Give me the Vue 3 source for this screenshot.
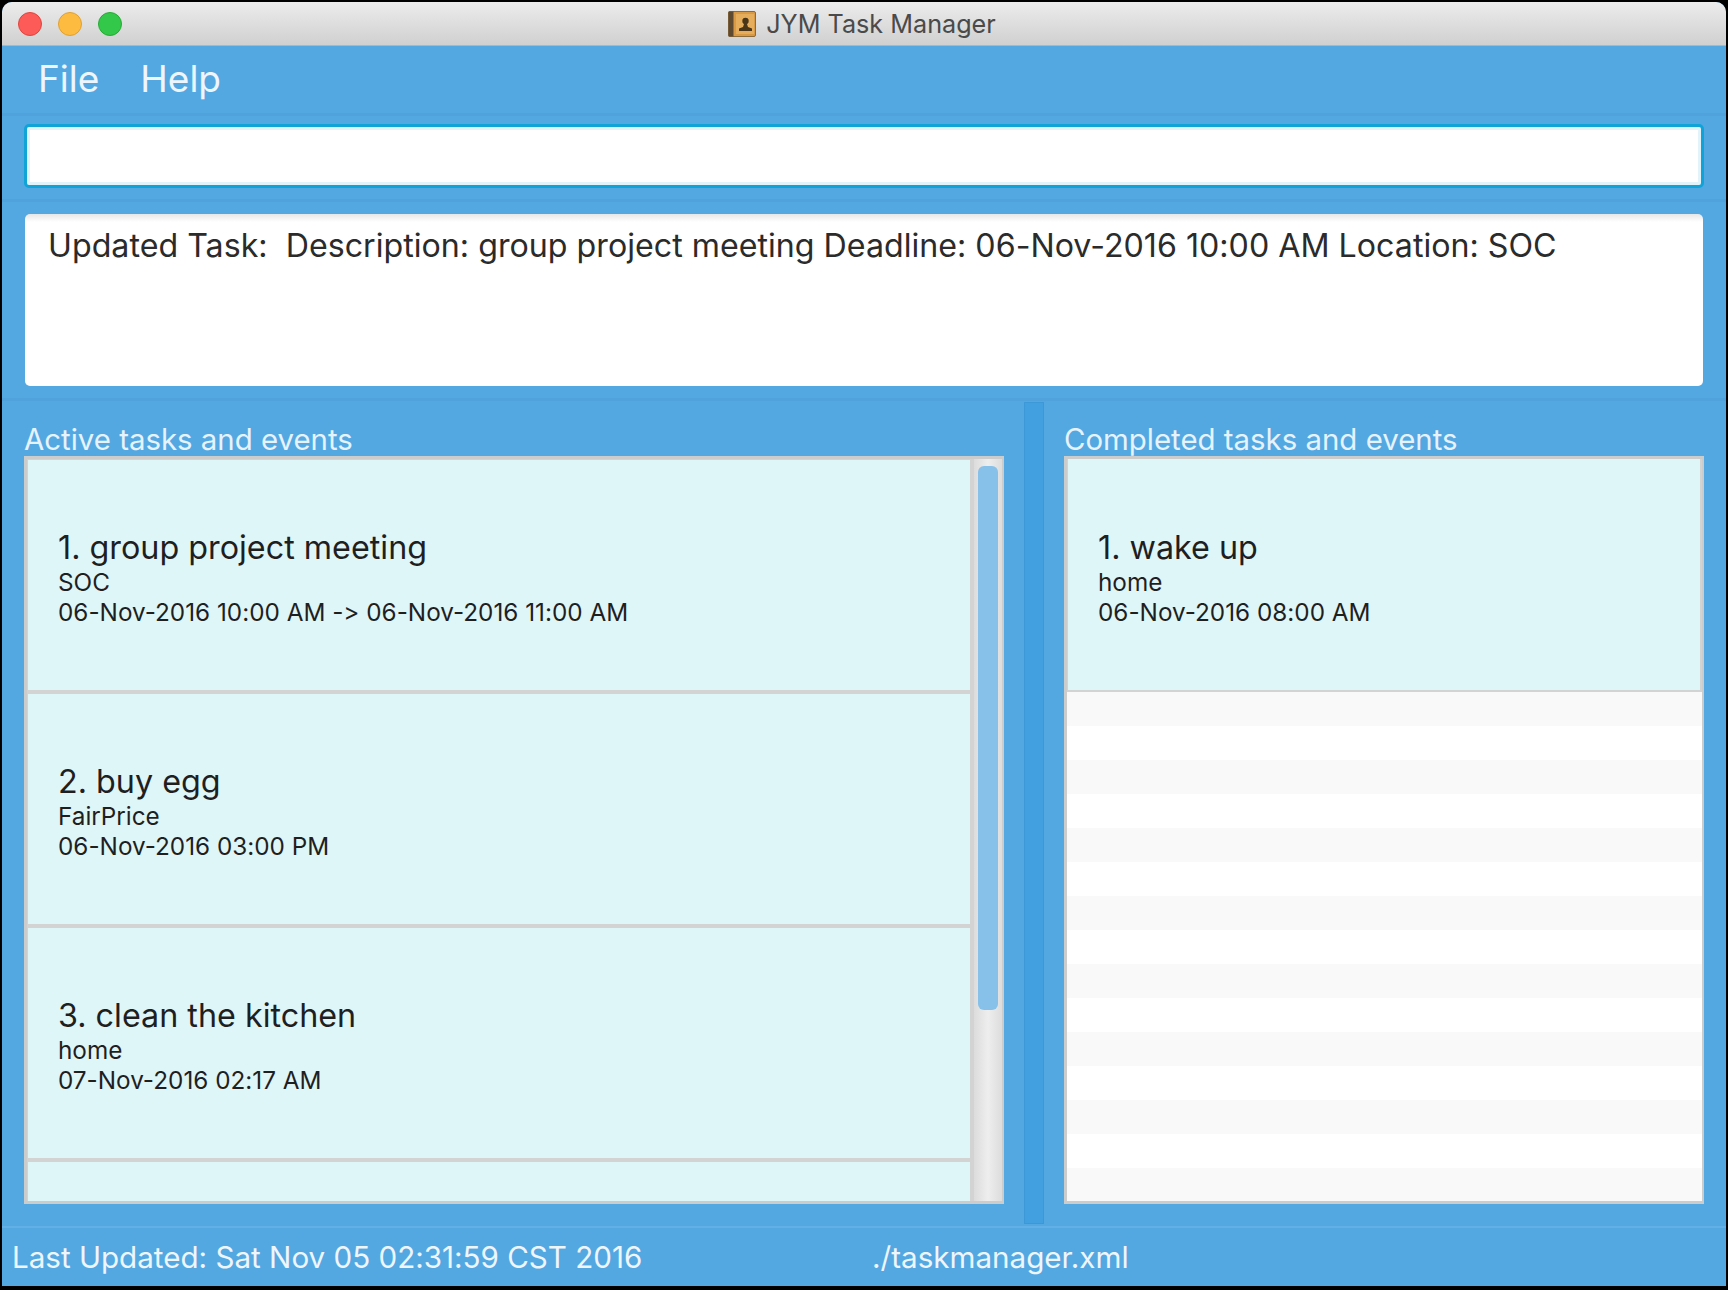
<template>
  <div class="window">
    <div class="titlebar">
      <div class="lights">
        <span class="light red"></span>
        <span class="light yellow"></span>
        <span class="light green"></span>
      </div>
      <div class="title">
        <svg class="app-icon" width="28" height="26" viewBox="0 0 28 26">
          <rect x="0.5" y="0.5" width="27" height="25" rx="1.5" fill="#d99a45" stroke="#8c6a3a" />
          <rect x="0.5" y="0.5" width="5" height="25" fill="#5e4a30" />
          <rect x="8" y="3" width="18" height="20" fill="#e6ad5c" />
          <circle cx="17.5" cy="10" r="3.2" fill="#4a3519" />
          <path d="M16 13h3l1 3 4 1.500V20H11v-2.500l4-1.500z" fill="#4a3519" />
        </svg>
        <span>JYM Task Manager</span>
      </div>
    </div>

    <div class="menubar">
      <span v-for="item in menus" :key="item" class="menu-item">{{ item }}</span>
    </div>

    <div class="command-pane">
      <div class="command-box"></div>
    </div>

    <div class="result-pane">
      <div class="result-box">{{ resultText }}</div>
    </div>

    <div class="split">
      <section class="col col-left">
        <h2 class="col-title">Active tasks and events</h2>
        <div class="list">
          <div class="rows">
            <div v-for="(task, i) in activeTasks" :key="task.name" class="card">
              <div class="card-name">{{ i + 1 }}. {{ task.name }}</div>
              <div class="card-line">{{ task.location }}</div>
              <div class="card-line">{{ task.time }}</div>
            </div>
            <div class="card"></div>
          </div>
          <div class="scrollbar"><div class="thumb"></div></div>
        </div>
      </section>
      <div class="divider"></div>
      <section class="col col-right">
        <h2 class="col-title">Completed tasks and events</h2>
        <div class="list list-done">
          <div class="card card-done">
            <div class="card-name">1. {{ doneTask.name }}</div>
            <div class="card-line">{{ doneTask.location }}</div>
            <div class="card-line">{{ doneTask.time }}</div>
          </div>
          <div v-for="n in 15" :key="n" class="stripe" :class="{ odd: n % 2 === 1 }"></div>
        </div>
      </section>
    </div>

    <div class="statusbar">
      <span class="status-left">Last Updated: Sat Nov 05 02:31:59 CST 2016</span>
      <span>./taskmanager.xml</span>
    </div>
  </div>
</template>

<script setup>
const menus = ['File', 'Help']

const resultText = 'Updated Task:  Description: group project meeting Deadline: 06-Nov-2016 10:00 AM Location: SOC'

const activeTasks = [
  { name: 'group project meeting', location: 'SOC', time: '06-Nov-2016 10:00 AM -> 06-Nov-2016 11:00 AM' },
  { name: 'buy egg', location: 'FairPrice', time: '06-Nov-2016 03:00 PM' },
  { name: 'clean the kitchen', location: 'home', time: '07-Nov-2016 02:17 AM' }
]

const doneTask = { name: 'wake up', location: 'home', time: '06-Nov-2016 08:00 AM' }
</script>

<style>
html,
body {
  background: #000;
}
</style>

<style scoped>
.window {
  box-sizing: border-box;
  width: 1724px;
  height: 1284px;
  margin: 2px;
  border-radius: 10px 10px 0 0;
  overflow: hidden;
  background: #53a8e2;
  color: #fff;
  font-family: Inter, "Liberation Sans", sans-serif;
  font-feature-settings: "calt" 0;
  display: flex;
  flex-direction: column;
}

.titlebar {
  position: relative;
  flex: none;
  height: 44px;
  box-sizing: border-box;
  padding-right: 4px;
  border-bottom: 1px solid #b4b4b4;
  background: linear-gradient(#ececec, #d0d0d0);
  display: flex;
  align-items: center;
  justify-content: center;
}

.lights {
  position: absolute;
  left: 16px;
  top: 10px;
  display: flex;
  gap: 16px;
}

.light {
  box-sizing: border-box;
  width: 24px;
  height: 24px;
  border-radius: 50%;
}

.red {
  background: #fc5b57;
  border: 1px solid #e0443e;
}

.yellow {
  background: #fdbc40;
  border: 1px solid #dea034;
}

.green {
  background: #34c84a;
  border: 1px solid #27aa35;
}

.title {
  display: flex;
  align-items: center;
  gap: 10px;
  color: #4a4a4a;
  font-size: 25.200px;
}

.menubar {
  flex: none;
  height: 70px;
  box-sizing: border-box;
  padding: 0 36px 3px;
  display: flex;
  align-items: center;
  gap: 41px;
  font-size: 37px;
  color: #eef6fc;
  border-bottom: 3px solid #4fa2dc;
}

.command-pane {
  flex: none;
  height: 86px;
  box-sizing: border-box;
  padding: 8px 22px 0;
  border-bottom: 3px solid #4fa2dc;
}

.command-box {
  box-sizing: border-box;
  height: 64px;
  border: 3px solid #0fa3d8;
  border-radius: 5px;
  background: #fff;
  box-shadow: inset 0 0 0 3px #e2f3fa;
}

.result-pane {
  flex: none;
  height: 199px;
  box-sizing: border-box;
  padding: 12px 23px 0;
  border-bottom: 3px solid #4fa2dc;
}

.result-box {
  box-sizing: border-box;
  height: 172px;
  padding: 12px 23px;
  border-radius: 5px;
  background: linear-gradient(#e6e6e6, #fff 8px);
  color: #2b2b2b;
  font-size: 32.200px;
  line-height: 40px;
  white-space: pre;
}

.split {
  flex: 1;
  min-height: 0;
  display: flex;
  padding: 1px 22px 2px;
  border-bottom: 2px solid #62b0e6;
}

.col {
  display: flex;
  flex-direction: column;
}

.col-left {
  width: 980px;
}

.col-right {
  width: 640px;
}

.col-title {
  flex: none;
  margin: 0;
  height: 54px;
  padding-top: 21px;
  box-sizing: border-box;
  font-size: 29.400px;
  font-weight: 400;
  line-height: 34px;
  color: #e6f3fc;
  white-space: nowrap;
}

.list {
  display: flex;
  height: 748px;
  box-sizing: border-box;
  border: 3px solid #cccccc;
  border-right-width: 2px;
  overflow: hidden;
}

.list-done {
  flex-direction: column;
  background: #fff;
}

.rows {
  flex: 1;
  min-width: 0;
  padding-top: 1px;
  background: #d3d3d3;
}

.card {
  box-sizing: border-box;
  height: 234px;
  padding: 68px 30px 0;
  background: #dff6f9;
  border: 0 solid #d3d3d3;
  border-width: 0 0 4px 1px;
  color: #1f1f1f;
}

.card-done {
  flex: none;
  padding: 69px 30px 0;
  border-width: 0 2px 2px 1px;
  height: 233px;
}

.card-name {
  font-size: 32.300px;
  line-height: 39px;
  white-space: nowrap;
}

.card-line {
  font-size: 24.300px;
  line-height: 30px;
  white-space: nowrap;
}

.scrollbar {
  flex: none;
  width: 32px;
  box-sizing: border-box;
  padding: 7px 4px 0 4px;
  border-left: 4px solid #d3d3d3;
  background: linear-gradient(90deg, #dcdcdc, #eeeeee 50%, #dcdcdc);
}

.thumb {
  height: 544px;
  border-radius: 6px;
  background: #87c1ea;
}

.stripe {
  flex: none;
  height: 34px;
}

.stripe.odd {
  background: #f9f9f9;
}

.divider {
  flex: none;
  width: 20px;
  margin: 0 20px;
  box-sizing: border-box;
  background: #42a0e0;
  border: 1px solid #3d98d8;
}

.statusbar {
  flex: none;
  height: 58px;
  box-sizing: border-box;
  padding: 0 10px;
  display: flex;
  align-items: center;
  font-size: 29.600px;
  color: #eef6fc;
  white-space: nowrap;
}

.status-left {
  width: 860px;
}
</style>
